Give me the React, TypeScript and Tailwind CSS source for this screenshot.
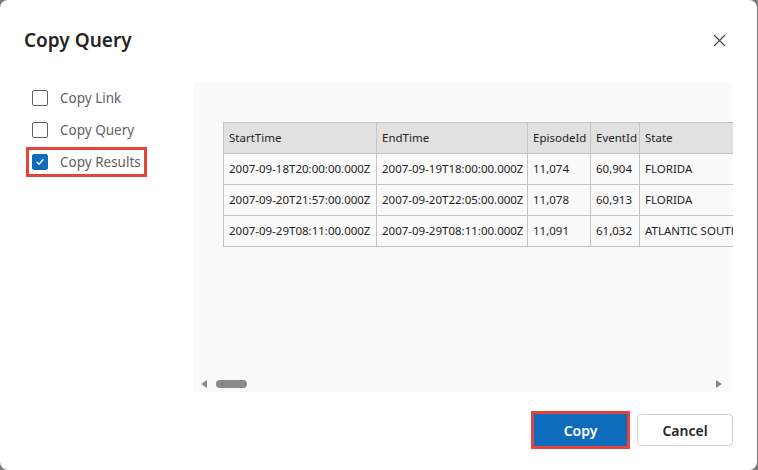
import React from "react";

const columns = [
  { name: "StartTime", width: "w-[153px]" },
  { name: "EndTime", width: "w-[151px]" },
  { name: "EpisodeId", width: "w-[63px]" },
  { name: "EventId", width: "w-[49px]" },
  { name: "State", width: "w-[140px]" },
];

const rows = [
  ["2007-09-18T20:00:00.000Z", "2007-09-19T18:00:00.000Z", "11,074", "60,904", "FLORIDA"],
  ["2007-09-20T21:57:00.000Z", "2007-09-20T22:05:00.000Z", "11,078", "60,913", "FLORIDA"],
  ["2007-09-29T08:11:00.000Z", "2007-09-29T08:11:00.000Z", "11,091", "61,032", "ATLANTIC SOUTH"],
];

function Checkbox({ label, checked, highlight }: { label: string; checked?: boolean; highlight?: boolean }) {
  return (
    <label
      className={`ml-[2px] flex h-[30px] w-fit items-center gap-3 border-[3px] pl-[3px] pr-[3px] ${
        highlight ? "border-[#e5433b]" : "border-transparent"
      }`}
    >
      <span
        className={`grid size-4 place-items-center rounded-[2px] border ${
          checked ? "border-[#0f6cbd] bg-[#0f6cbd]" : "border-[#616161] bg-white"
        }`}
      >
        {checked && (
          <svg width="10" height="10" viewBox="0 0 10 10" fill="none">
            <path d="M2 5.2 4 7.2 8 2.8" stroke="white" strokeWidth="1.3" strokeLinecap="round" strokeLinejoin="round" />
          </svg>
        )}
      </span>
      <span className="text-[13.5px] leading-5 text-[#616161]">{label}</span>
    </label>
  );
}

export default function App() {
  return (
    <div className="flex h-[470px] w-[758px] bg-[#7a7a7a] font-['Noto_Sans',sans-serif] text-[#242424]">
      <div className="flex h-full w-[757px] flex-col rounded-lg bg-white px-6 pb-6">
        <header className="flex items-center justify-between pt-6">
          <h1 className="text-[19px] font-semibold leading-8">Copy Query</h1>
          <button className="mr-[2px] grid size-6 place-items-center text-[#424242]">
            <svg width="13" height="13" viewBox="0 0 13 13" fill="none">
              <path d="M1 1 12 12M12 1 1 12" stroke="currentColor" strokeWidth="1.1" />
            </svg>
          </button>
        </header>

        <div className="mt-[26px] flex h-[310px]">
          <div className="flex w-[169px] shrink-0 flex-col gap-[2px] pt-[1px]">
            <Checkbox label="Copy Link" />
            <Checkbox label="Copy Query" />
            <Checkbox label="Copy Results" checked highlight />
          </div>

          <div className="flex min-w-0 flex-1 flex-col rounded-t bg-[#fafafa]">
            <div className="flex-1 overflow-hidden pl-[30px] pt-10">
              <table className="w-[556px] table-fixed border-collapse text-[11.5px] leading-4">
                <thead>
                  <tr className="h-[31px] bg-[#e1e1e1]">
                    {columns.map((c) => (
                      <th key={c.name} className={`${c.width} border border-[#c4c4c4] px-[5px] text-left font-normal`}>
                        {c.name}
                      </th>
                    ))}
                  </tr>
                </thead>
                <tbody>
                  {rows.map((r, i) => (
                    <tr key={i} className="h-[31px]">
                      {r.map((v, j) => (
                        <td key={j} className="overflow-hidden whitespace-nowrap border border-[#c4c4c4] px-[5px]">
                          {v}
                        </td>
                      ))}
                    </tr>
                  ))}
                </tbody>
              </table>
            </div>
            <div className="flex h-4 items-center justify-between pl-2 pr-[11px] pb-[1px]">
              <div className="flex items-center gap-[9px]">
                <svg width="6" height="8" viewBox="0 0 6 8">
                  <path d="M6 0 0 4 6 8Z" fill="#8a8a8a" />
                </svg>
                <div className="h-2 w-[31px] rounded-full bg-[#8a8a8a]" />
              </div>
              <svg width="6" height="8" viewBox="0 0 6 8">
                <path d="M0 0 6 4 0 8Z" fill="#8a8a8a" />
              </svg>
            </div>
          </div>
        </div>

        <footer className="mt-auto flex justify-end gap-[10px]">
          <button className="h-8 w-[93px] bg-[#0f6cbd] text-[14px] font-semibold text-white outline-[3px] outline-offset-0 outline-[#e5433b]">
            Copy
          </button>
          <button className="h-8 w-[96px] rounded border border-[#d1d1d1] bg-white text-[14px] font-semibold text-[#242424]">
            Cancel
          </button>
        </footer>
      </div>
    </div>
  );
}
